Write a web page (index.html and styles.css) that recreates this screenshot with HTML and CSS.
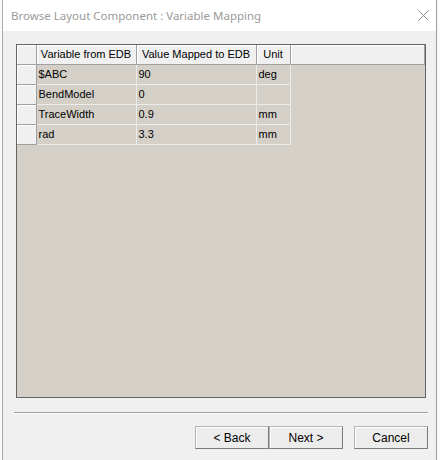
FILE: index.html
```html
<!DOCTYPE html>
<html lang="en">
<head>
  <meta charset="UTF-8" />
  <title>Browse Layout Component : Variable Mapping</title>
  <link rel="stylesheet" href="styles.css">
</head>
<body>
  <div class="window">
    <div class="titlebar">
      <span class="title">Browse Layout Component : Variable Mapping</span>
      <svg class="close" width="11" height="11" viewBox="0 0 11 11">
        <path d="M0.5 0.5 L10.5 10.5 M10.5 0.5 L0.5 10.5" stroke="#8a8a8a" stroke-width="1" fill="none"/>
      </svg>
    </div>

    <div class="client">
      <div class="grid">
        <table>
          <colgroup>
            <col class="c-head">
            <col class="c-var">
            <col class="c-val">
            <col class="c-unit">
            <col>
          </colgroup>
          <thead>
            <tr>
              <th></th>
              <th>Variable from EDB</th>
              <th>Value Mapped to EDB</th>
              <th>Unit</th>
              <th></th>
            </tr>
          </thead>
          <tbody>
            <tr><th></th><td>$ABC</td><td>90</td><td>deg</td><td class="void"></td></tr>
            <tr><th></th><td>BendModel</td><td>0</td><td></td><td class="void"></td></tr>
            <tr><th></th><td>TraceWidth</td><td>0.9</td><td>mm</td><td class="void"></td></tr>
            <tr><th></th><td>rad</td><td>3.3</td><td>mm</td><td class="void"></td></tr>
          </tbody>
        </table>
      </div>

      <div class="separator"></div>

      <div class="buttons">
        <button class="btn">&lt; Back</button>
        <button class="btn">Next &gt;</button>
        <button class="btn cancel">Cancel</button>
      </div>
    </div>
  </div>
</body>
</html>
```

FILE: styles.css
```css
* { box-sizing: border-box; }
body {
  margin: 0;
  background: #fafafa;
  font-family: 'Liberation Sans', Arial, sans-serif;
  font-size: 11px;
  color: #000;
}
.window {
  margin-left: 2px;
  width: 435px;
  height: 460px;
  border-left: 1px solid #a9a9a9;
  border-right: 1px solid #9c9c9c;
  display: flex;
  flex-direction: column;
}
.titlebar {
  height: 31px;
  background: #fff;
  display: flex;
  align-items: center;
  padding: 0 7px 0 8px;
}
.title {
  font-family: 'Noto Sans', sans-serif;
  font-size: 11.5px;
  color: #9a9a9a;
}
.close { margin-left: auto; }
.client {
  flex: 1;
  background: #f0f0f0;
  padding: 13px 8px 0 13px;
}
.grid {
  width: 410px;
  height: 354px;
  background: #d4d0c8;
  border: 1px solid #646464;
}
table {
  width: 100%;
  border-collapse: collapse;
  table-layout: fixed;
}
.c-head { width: 19px; }
.c-var { width: 100px; }
.c-val { width: 120px; }
.c-unit { width: 34px; }
thead th {
  height: 19px;
  background: #f0f0f0;
  font-weight: normal;
  text-align: center;
  padding: 0;
  border-right: 1px solid #a0a0a0;
  border-bottom: 1px solid #a0a0a0;
  box-shadow: inset 1px 1px 0 #fff;
}
tbody th {
  height: 20px;
  padding: 0;
  background: #f0f0f0;
  border-right: 1px solid #a0a0a0;
  border-bottom: 1px solid #a0a0a0;
  box-shadow: inset 1px 1px 0 #fff;
}
td {
  height: 20px;
  padding: 0 0 0 2px;
  border-right: 1px solid #ebebeb;
  border-bottom: 1px solid #ebebeb;
  white-space: nowrap;
  overflow: hidden;
}
td.void { border: none; }
.separator {
  margin: 14px 0 0 -2px;
  width: 414px;
  border-top: 1px solid #a0a0a0;
  border-bottom: 1px solid #fff;
}
.buttons {
  display: flex;
  justify-content: flex-end;
  margin-top: 12px;
}
.btn {
  width: 74px;
  height: 23px;
  margin: 0;
  padding: 0;
  font-family: 'Liberation Sans', Arial, sans-serif;
  font-size: 12px;
  color: #000;
  background: #ececec;
  border: 1px solid #b5b5b5;
  border-right-color: #7a7a7a;
  border-bottom-color: #7a7a7a;
  box-shadow: inset 1px 1px 0 #fff;
}
.cancel { margin-left: 11px; }
```
